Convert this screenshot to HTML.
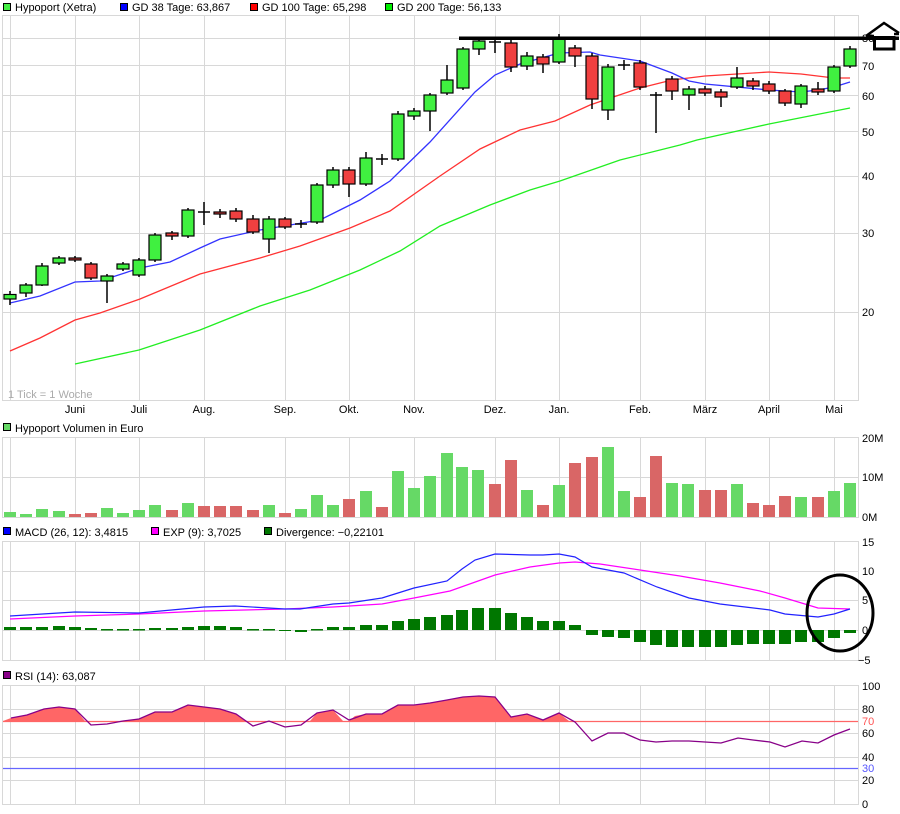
<!DOCTYPE html>
<html><head><meta charset="utf-8"><style>
html,body{margin:0;padding:0;background:#fff;}
svg{display:block;font-family:"Liberation Sans",Arial,sans-serif;font-size:11px;}
</style></head><body>
<svg width="900" height="814" viewBox="0 0 900 814" xmlns="http://www.w3.org/2000/svg">
<rect width="900" height="814" fill="#fff"/>
<!-- legends -->
<g stroke="#000" stroke-width="1">
<rect x="3.5" y="3.5" width="7" height="7" fill="#44ee44"/>
<rect x="120.5" y="3.5" width="7" height="7" fill="#0000ff"/>
<rect x="250.5" y="3.5" width="7" height="7" fill="#ff0000"/>
<rect x="385.5" y="3.5" width="7" height="7" fill="#00ee00"/>
<rect x="3.5" y="423.5" width="7" height="7" fill="#66d966"/>
<rect x="3.5" y="527.5" width="7" height="7" fill="#0000ff"/>
<rect x="151.5" y="527.5" width="7" height="7" fill="#ff00ff"/>
<rect x="264.5" y="527.5" width="7" height="7" fill="#007700"/>
<rect x="3.5" y="671.5" width="7" height="7" fill="#880088"/>
</g>
<g fill="#000">
<text x="15" y="11">Hypoport (Xetra)</text>
<text x="132" y="11">GD 38 Tage: 63,867</text>
<text x="262" y="11">GD 100 Tage: 65,298</text>
<text x="397" y="11">GD 200 Tage: 56,133</text>
<text x="15" y="432">Hypoport Volumen in Euro</text>
<text x="15" y="536">MACD (26, 12): 3,4815</text>
<text x="163" y="536">EXP (9): 3,7025</text>
<text x="276" y="536">Divergence: −0,22101</text>
<text x="15" y="680">RSI (14): 63,087</text>
</g>
<!-- grids -->
<g stroke="#d8d8d8" stroke-width="1" fill="none">
<rect x="2.5" y="15.5" width="856" height="385"/>
<rect x="2.5" y="437.5" width="856" height="80"/>
<rect x="2.5" y="541.5" width="856" height="119"/>
<rect x="2.5" y="685.5" width="856" height="119"/>
<path d="M3 38.5H858M3 65.5H858M3 95.5H858M3 131.5H858M3 176.5H858M3 233.5H858M3 312.5H858"/>
<path d="M3 477.5H858"/>
<path d="M3 571.5H858M3 600.5H858M3 630.5H858"/>
<path d="M3 709.5H858M3 733.5H858M3 757.5H858M3 780.5H858"/>
<path d="M10.5 15V400M75.5 15V400M139.5 15V400M204.5 15V400M285.5 15V400M349.5 15V400M414.5 15V400M495.5 15V400M559.5 15V400M640.5 15V400M705.5 15V400M769.5 15V400M834.5 15V400"/>
<path d="M10.5 437V517M75.5 437V517M139.5 437V517M204.5 437V517M285.5 437V517M349.5 437V517M414.5 437V517M495.5 437V517M559.5 437V517M640.5 437V517M705.5 437V517M769.5 437V517M834.5 437V517"/>
<path d="M10.5 541V660M75.5 541V660M139.5 541V660M204.5 541V660M285.5 541V660M349.5 541V660M414.5 541V660M495.5 541V660M559.5 541V660M640.5 541V660M705.5 541V660M769.5 541V660M834.5 541V660"/>
<path d="M10.5 685V804M75.5 685V804M139.5 685V804M204.5 685V804M285.5 685V804M349.5 685V804M414.5 685V804M495.5 685V804M559.5 685V804M640.5 685V804M705.5 685V804M769.5 685V804M834.5 685V804"/>
</g>
<!-- axis labels -->
<g fill="#000">
<text x="862" y="42">80</text><text x="862" y="70">70</text><text x="862" y="100">60</text><text x="862" y="136">50</text><text x="862" y="180">40</text><text x="862" y="237">30</text><text x="862" y="316">20</text>
<text x="862" y="442">20M</text><text x="862" y="481">10M</text><text x="862" y="521">0M</text>
<text x="862" y="546">15</text><text x="862" y="575">10</text><text x="862" y="604">5</text><text x="862" y="634">0</text><text x="858" y="664">−5</text>
<text x="862" y="690">100</text><text x="862" y="713">80</text><text x="862" y="737">60</text><text x="862" y="761">40</text><text x="862" y="784">20</text><text x="862" y="808">0</text>
</g>
<text x="862" y="725" fill="#ff5555">70</text>
<text x="862" y="772" fill="#5555ff">30</text>
<text x="8" y="398" fill="#aaa">1 Tick = 1 Woche</text>
<g fill="#000" text-anchor="middle">
<text x="75" y="413">Juni</text><text x="139" y="413">Juli</text><text x="204" y="413">Aug.</text><text x="285" y="413">Sep.</text><text x="349" y="413">Okt.</text><text x="414" y="413">Nov.</text><text x="495" y="413">Dez.</text><text x="559" y="413">Jan.</text><text x="640" y="413">Feb.</text><text x="705" y="413">März</text><text x="769" y="413">April</text><text x="834" y="413">Mai</text>
</g>
<!-- moving averages -->
<polyline fill="none" stroke="#22ee22" stroke-width="1.3" points="75,364 139,350 200,330 260,306 310,290 360,270 400,251 440,226 490,205 530,190 560,181 620,160 680,145 697,140 769,124 850,108"/>
<polyline fill="none" stroke="#ff3333" stroke-width="1.3" points="10,351 40,338 75,320 100,313 140,299 200,274 260,258 300,246 350,228 390,211 440,176 480,149 520,130 555,121 590,105 640,88 672,80 705,76 769,72 801,74 834,78 850,78"/>
<polyline fill="none" stroke="#3333ff" stroke-width="1.3" points="10,303 40,296 75,282 100,281 140,268 170,262 200,248 220,239 260,230 290,225 320,220 340,210 360,200 390,181 430,142 475,92 495,75 520,64 559,53 590,52 600,55 640,61 672,73 689,81 705,84 769,90 801,92 818,90 834,87 850,82"/>
<!-- wicks -->
<g stroke="#000" stroke-width="1.5">
<path d="M10 291V305M26 283V297M42 263V286M59 256V265M75 256V262M91 262V280M107 274V303M123 262V271M139 258V277M155 233V262M172 231V240M188 208V238M204 202V225M220 209V218M236 208V222M253 215V234M269 216V253M285 217V229M301 220V228M317 183V224M333 167V188M349 167V197M366 152V186M382 154V165M398 111V161M414 108V120M430 93V131M447 65V95M463 47V90M479 39V55M495 39V53M511 40V72M527 52V70M543 54V73M559 34V64M575 45V67M592 53V109M608 64V120M624 60V70M640 60V90M656 92V133M672 76V100M689 86V110M705 86V96M721 89V107M737 67V89M753 78V90M769 81V94M785 89V106M801 84V108M818 82V95M834 65V93M850 46V68"/>
<path d="M198 212H210M376 159H388M489 42H501M618 65H630M650 95H662M295 224H307"/>
</g>
<!-- candle bodies -->
<g stroke="#000" stroke-width="1.2">
<g fill="#40f040">
<rect x="4" y="294.5" width="12" height="4.5"/><rect x="20" y="285" width="12" height="8"/><rect x="36" y="266" width="12" height="19"/><rect x="53" y="258" width="12" height="5"/><rect x="101" y="276" width="12" height="5"/><rect x="117" y="264" width="12" height="5"/><rect x="133" y="260" width="12" height="15"/><rect x="149" y="235" width="12" height="25"/><rect x="182" y="210" width="12" height="26"/><rect x="263" y="219" width="12" height="20"/><rect x="311" y="185" width="12" height="37"/><rect x="327" y="170" width="12" height="15"/><rect x="360" y="158" width="12" height="26"/><rect x="392" y="114" width="12" height="45"/><rect x="408" y="111" width="12" height="5"/><rect x="424" y="95" width="12" height="16"/><rect x="441" y="80" width="12" height="13"/><rect x="457" y="49" width="12" height="39"/><rect x="473" y="41" width="12" height="8"/><rect x="521" y="56" width="12" height="10"/><rect x="553" y="39" width="12" height="23"/><rect x="602" y="67" width="12" height="43"/><rect x="683" y="89" width="12" height="6"/><rect x="731" y="78" width="12" height="9"/><rect x="795" y="86" width="12" height="18"/><rect x="828" y="67" width="12" height="24"/><rect x="844" y="49" width="12" height="17"/>
</g>
<g fill="#f04040">
<rect x="69" y="258" width="12" height="2"/><rect x="85" y="264" width="12" height="14"/><rect x="166" y="233" width="12" height="3"/><rect x="214" y="212" width="12" height="2"/><rect x="230" y="211" width="12" height="8"/><rect x="247" y="219" width="12" height="13"/><rect x="279" y="219" width="12" height="8"/><rect x="343" y="170" width="12" height="14"/><rect x="505" y="43" width="12" height="24"/><rect x="537" y="57" width="12" height="7"/><rect x="569" y="48" width="12" height="8"/><rect x="586" y="56" width="12" height="43"/><rect x="634" y="63" width="12" height="24"/><rect x="666" y="79" width="12" height="12"/><rect x="699" y="89" width="12" height="4"/><rect x="715" y="92" width="12" height="5"/><rect x="747" y="81" width="12" height="5"/><rect x="763" y="84" width="12" height="7"/><rect x="779" y="91" width="12" height="12"/><rect x="812" y="89" width="12" height="3"/>
</g>
</g>
<!-- resistance line and house -->
<rect x="459" y="36.5" width="440" height="3.5" fill="#000"/>
<path d="M866 36 L884 23 L899 33 M866 36H874 M894 34H899" fill="none" stroke="#000" stroke-width="2.5"/>
<rect x="874.5" y="37.5" width="19.5" height="11.5" fill="none" stroke="#000" stroke-width="3"/>
<!-- volume -->
<g fill="#66d966">
<rect x="4" y="512" width="12" height="5"/><rect x="20" y="514" width="12" height="3"/><rect x="36" y="509" width="12" height="8"/><rect x="53" y="511" width="12" height="6"/><rect x="101" y="508" width="12" height="9"/><rect x="117" y="513" width="12" height="4"/><rect x="133" y="510" width="12" height="7"/><rect x="149" y="505" width="12" height="12"/><rect x="182" y="503" width="12" height="14"/><rect x="263" y="505" width="12" height="12"/><rect x="295" y="509" width="12" height="8"/><rect x="311" y="495" width="12" height="22"/><rect x="327" y="505" width="12" height="12"/><rect x="360" y="491" width="12" height="26"/><rect x="392" y="471" width="12" height="46"/><rect x="408" y="488" width="12" height="29"/><rect x="424" y="476" width="12" height="41"/><rect x="441" y="453" width="12" height="64"/><rect x="456" y="467" width="12" height="50"/><rect x="472" y="470" width="12" height="47"/><rect x="521" y="490" width="12" height="27"/><rect x="553" y="485" width="12" height="32"/><rect x="602" y="447" width="12" height="70"/><rect x="618" y="491" width="12" height="26"/><rect x="666" y="483" width="12" height="34"/><rect x="682" y="484" width="12" height="33"/><rect x="731" y="484" width="12" height="33"/><rect x="795" y="497" width="12" height="20"/><rect x="828" y="491" width="12" height="26"/><rect x="844" y="483" width="12" height="34"/>
</g>
<g fill="#d96666">
<rect x="69" y="514" width="12" height="3"/><rect x="85" y="513" width="12" height="4"/><rect x="166" y="510" width="12" height="7"/><rect x="198" y="506" width="12" height="11"/><rect x="214" y="506" width="12" height="11"/><rect x="230" y="506" width="12" height="11"/><rect x="247" y="510" width="12" height="7"/><rect x="279" y="513" width="12" height="4"/><rect x="343" y="499" width="12" height="18"/><rect x="376" y="507" width="12" height="10"/><rect x="489" y="484" width="12" height="33"/><rect x="505" y="460" width="12" height="57"/><rect x="537" y="505" width="12" height="12"/><rect x="569" y="463" width="12" height="54"/><rect x="586" y="457" width="12" height="60"/><rect x="634" y="497" width="12" height="20"/><rect x="650" y="456" width="12" height="61"/><rect x="699" y="490" width="12" height="27"/><rect x="715" y="490" width="12" height="27"/><rect x="747" y="503" width="12" height="14"/><rect x="763" y="505" width="12" height="12"/><rect x="779" y="496" width="12" height="21"/><rect x="812" y="497" width="12" height="20"/>
</g>
<!-- MACD histogram -->
<g fill="#007700">
<rect x="4" y="627" width="12" height="3"/><rect x="20" y="627" width="12" height="3"/><rect x="36" y="627" width="12" height="3"/><rect x="53" y="626" width="12" height="4"/><rect x="69" y="627" width="12" height="3"/><rect x="85" y="628" width="12" height="2"/><rect x="101" y="629" width="12" height="1.5"/><rect x="117" y="629" width="12" height="1.5"/><rect x="133" y="629" width="12" height="1.5"/><rect x="149" y="628" width="12" height="2"/><rect x="166" y="628" width="12" height="2"/><rect x="182" y="627" width="12" height="3"/><rect x="198" y="626" width="12" height="4"/><rect x="214" y="626" width="12" height="4"/><rect x="230" y="627" width="12" height="3"/><rect x="247" y="629" width="12" height="1.5"/><rect x="263" y="629" width="12" height="1.5"/><rect x="279" y="630" width="12" height="1"/><rect x="295" y="630" width="12" height="2"/><rect x="311" y="629" width="12" height="1.5"/><rect x="327" y="627" width="12" height="3"/><rect x="343" y="627" width="12" height="3"/><rect x="360" y="625" width="12" height="5"/><rect x="376" y="625" width="12" height="5"/><rect x="392" y="621" width="12" height="9"/><rect x="408" y="619" width="12" height="11"/><rect x="424" y="617" width="12" height="13"/><rect x="441" y="615" width="12" height="15"/><rect x="456" y="610" width="12" height="20"/><rect x="472" y="608" width="12" height="22"/><rect x="489" y="608" width="12" height="22"/><rect x="505" y="613" width="12" height="17"/><rect x="521" y="617" width="12" height="13"/><rect x="537" y="621" width="12" height="9"/><rect x="553" y="621" width="12" height="9"/><rect x="569" y="625" width="12" height="5"/>
<rect x="586" y="630" width="12" height="5"/><rect x="602" y="630" width="12" height="7"/><rect x="618" y="630" width="12" height="8"/><rect x="634" y="630" width="12" height="12"/><rect x="650" y="630" width="12" height="15"/><rect x="666" y="630" width="12" height="17"/><rect x="682" y="630" width="12" height="17"/><rect x="699" y="630" width="12" height="17"/><rect x="715" y="630" width="12" height="17"/><rect x="731" y="630" width="12" height="15"/><rect x="747" y="630" width="12" height="14"/><rect x="763" y="630" width="12" height="14"/><rect x="779" y="630" width="12" height="14"/><rect x="795" y="630" width="12" height="12"/><rect x="812" y="630" width="12" height="12"/><rect x="828" y="630" width="12" height="8"/><rect x="844" y="630" width="12" height="3"/>
</g>
<polyline fill="none" stroke="#ff00ff" stroke-width="1.2" points="10,619 75,616 139,614 204,611 285,609 333,607 382,604 414,598 450,591 495,575 530,567 559,563 575,562 600,564 640,570 680,576 720,583 760,591 785,598 818,608 850,609"/>
<polyline fill="none" stroke="#2222ff" stroke-width="1.2" points="10,616 75,612 139,613 204,607 235,606 285,609 300,609 333,604 349,603 382,598 398,593 414,588 447,581 462,569 475,560 495,554 530,555 543,555 559,554 575,557 592,567 624,573 657,587 689,598 720,604 770,610 785,614 818,617 834,614 850,609"/>
<ellipse cx="840" cy="613" rx="33" ry="38" fill="none" stroke="#000" stroke-width="3"/>
<!-- RSI -->
<polygon fill="#ff6666" points="3,721 11,718 27,715 44,709 59,707 75,709 85,721 120,721 139,719 155,712 172,712 188,705 204,707 220,709 236,714 245,721 262,721 269,721 275,721 310,721 317,713 333,710 343,721 349,721 355,716 366,714 382,714 398,705 414,705 430,703 447,700 463,697 479,696 495,697 511,717 527,714 543,720 559,713 569,721"/>
<line x1="3" y1="721.5" x2="858" y2="721.5" stroke="#ff6666" stroke-width="1.2"/>
<line x1="3" y1="768.5" x2="858" y2="768.5" stroke="#6666ff" stroke-width="1.2"/>
<polyline fill="none" stroke="#880088" stroke-width="1.3" points="11,718 27,715 44,709 59,707 75,709 91,725 107,724 123,721 139,719 155,712 172,712 188,705 204,707 220,709 236,714 253,726 269,721 285,727 301,725 317,713 333,710 349,720 366,714 382,714 398,705 414,705 430,703 447,700 463,697 479,696 495,697 511,717 527,714 543,720 559,713 575,722 592,741 608,733 624,733 640,740 656,742 672,741 689,741 705,742 721,743 738,738 753,740 770,742 785,747 802,741 818,743 834,735 850,729"/>
</svg>
</body></html>
